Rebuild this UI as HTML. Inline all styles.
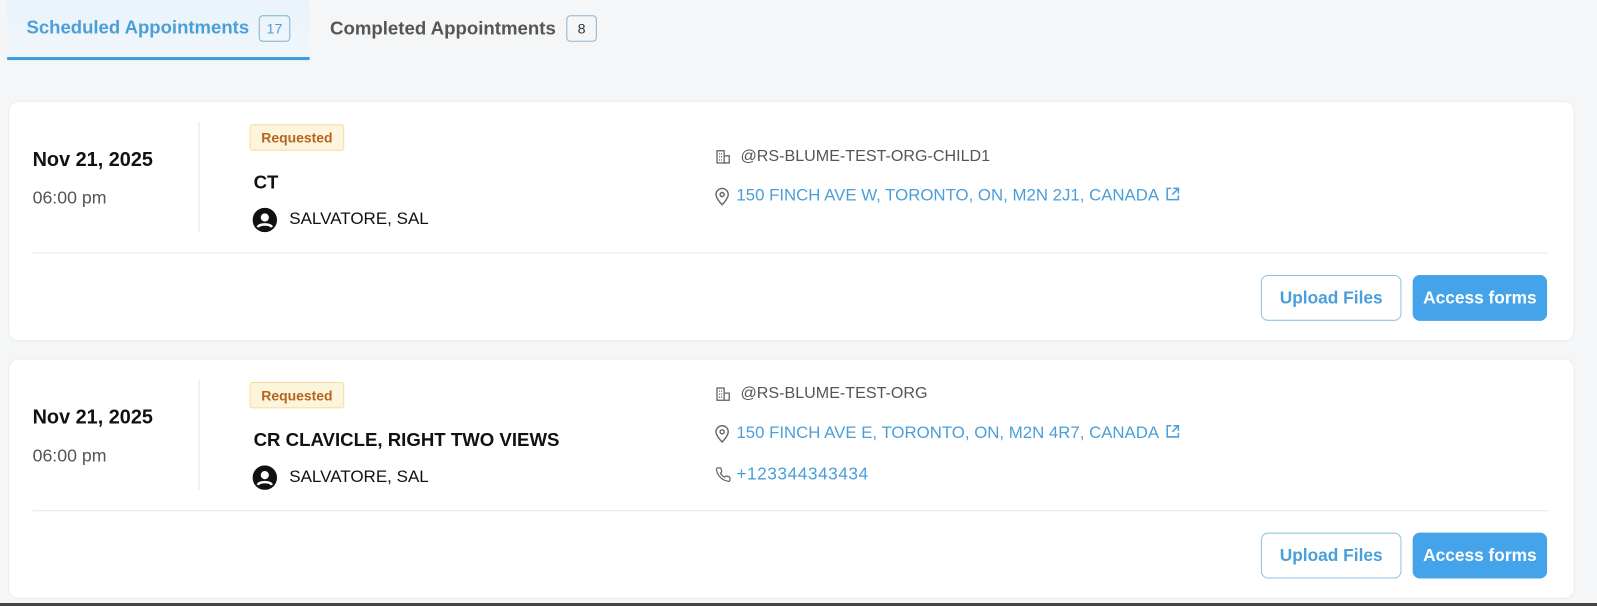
<!DOCTYPE html>
<html><head><meta charset="utf-8"><style>
*{margin:0;padding:0;box-sizing:border-box}
body{width:1597px;height:606px;background:#f5f6f7;font-family:"Liberation Sans",Arial,sans-serif;position:relative;overflow:hidden}
#w{position:absolute;left:0;top:0;width:1568px;height:595px;transform:scale(1.0185);transform-origin:0 0}
.a{position:absolute;white-space:nowrap}
.tab{top:0;height:59px;left:7px;width:297px;background:linear-gradient(#eaf3fb,#f0f6fb);border-bottom:3px solid #3d9be0}
.badge{border:1.5px solid #7fb2cf;border-radius:4px;height:26px;font-size:14px;display:flex;align-items:center;justify-content:center;color:#333}
.card{left:8px;width:1538px;height:236px;background:#fff;border:1px solid #ebeced;border-radius:10px}
.date{font-size:19.5px;font-weight:bold;color:#111;left:32px}
.time{font-size:17.4px;color:#555;left:32px}
.vd{left:195px;width:1px;height:108px;background:#e3e3e3}
.req{left:245px;width:93px;height:26px;background:#fdf4dc;border:1px solid #f3dca4;border-radius:3px;color:#b5651d;font-size:13.7px;font-weight:bold;display:flex;align-items:center;justify-content:center}
.title{left:249px;font-size:18.3px;font-weight:bold;color:#111}
.user{left:284px;font-size:16.7px;color:#111}
.org{left:727px;font-size:15.8px;color:#555}
.blue{left:723px;font-size:16.5px;color:#4a9fd8}
.blue svg{margin-left:6px;vertical-align:-1px}
.hl{left:32px;width:1488px;height:1px;background:#e6e6e6}
.btn{height:45px;border-radius:7px;font-size:17px;font-weight:bold;display:flex;align-items:center;justify-content:center}
.up{left:1238px;width:138px;border:1.5px solid #8ec3e0;color:#4a9fd8;background:#fff}
.ac{left:1387px;width:132px;background:#45a3ea;color:#fff}
</style></head><body>
<div id="w">
<div class="a tab"></div>
<div class="a" style="left:26px;top:17px;font-size:18.2px;color:#4a9fd8;font-weight:bold">Scheduled Appointments</div>
<div class="a badge" style="left:254px;top:15px;width:31px;color:#4a9fd8;border-color:#7fb2cf">17</div>
<div class="a" style="left:324px;top:17px;font-size:18.3px;color:#555;font-weight:bold">Completed Appointments</div>
<div class="a badge" style="left:556px;top:15px;width:30px;border-color:#8fb5cc">8</div>

<div class="a card" style="top:99px"></div>
<div class="a date" style="top:146px">Nov 21, 2025</div>
<div class="a time" style="top:184px">06:00 pm</div>
<div class="a vd" style="top:120px"></div>
<div class="a req" style="top:122px">Requested</div>
<div class="a title" style="top:168px">CT</div>
<svg class="a" style="left:248px;top:204px" width="24" height="24" viewBox="0 0 24 24"><circle cx="12" cy="12" r="12" fill="#111"/><circle cx="12" cy="9.5" r="4" fill="#fff"/><path d="M5 19c2-3.5 12-3.5 14 0" stroke="#fff" stroke-width="2.5" fill="none"/></svg>
<div class="a user" style="top:205px">SALVATORE, SAL</div>
<svg class="a" style="left:702px;top:146px" width="16" height="16" viewBox="0 0 16 16" fill="none" stroke="#666" stroke-width="1.3"><rect x="2" y="2" width="7" height="12"/><path d="M9 7h5v7H9M4 5h1M6 5h1M4 8h1M6 8h1M4 11h1M6 11h1"/></svg>
<div class="a org" style="top:145px">@RS-BLUME-TEST-ORG-CHILD1</div>
<svg class="a" style="left:701px;top:184px" width="16" height="18" viewBox="0 0 16 18" fill="none" stroke="#666" stroke-width="1.4"><path d="M8 17s6-6 6-10A6 6 0 0 0 2 7c0 4 6 10 6 10z"/><circle cx="8" cy="7" r="2"/></svg>
<div class="a blue" style="top:183px">150 FINCH AVE W, TORONTO, ON, M2N 2J1, CANADA<svg width="15" height="15" viewBox="0 0 15 15" fill="none" stroke="#4a9fd8" stroke-width="1.5"><path d="M6 2H2v11h11V9M8 2h5v5M13 2L7 8"/></svg></div>
<div class="a hl" style="top:248px"></div>
<div class="a btn up" style="top:270px">Upload Files</div>
<div class="a btn ac" style="top:270px">Access forms</div>

<div class="a card" style="top:352px"></div>
<div class="a date" style="top:399px">Nov 21, 2025</div>
<div class="a time" style="top:437px">06:00 pm</div>
<div class="a vd" style="top:373px"></div>
<div class="a req" style="top:375px">Requested</div>
<div class="a title" style="top:421px">CR CLAVICLE, RIGHT TWO VIEWS</div>
<svg class="a" style="left:248px;top:457px" width="24" height="24" viewBox="0 0 24 24"><circle cx="12" cy="12" r="12" fill="#111"/><circle cx="12" cy="9.5" r="4" fill="#fff"/><path d="M5 19c2-3.5 12-3.5 14 0" stroke="#fff" stroke-width="2.5" fill="none"/></svg>
<div class="a user" style="top:458px">SALVATORE, SAL</div>
<svg class="a" style="left:702px;top:379px" width="16" height="16" viewBox="0 0 16 16" fill="none" stroke="#666" stroke-width="1.3"><rect x="2" y="2" width="7" height="12"/><path d="M9 7h5v7H9M4 5h1M6 5h1M4 8h1M6 8h1M4 11h1M6 11h1"/></svg>
<div class="a org" style="top:378px">@RS-BLUME-TEST-ORG</div>
<svg class="a" style="left:701px;top:417px" width="16" height="18" viewBox="0 0 16 18" fill="none" stroke="#666" stroke-width="1.4"><path d="M8 17s6-6 6-10A6 6 0 0 0 2 7c0 4 6 10 6 10z"/><circle cx="8" cy="7" r="2"/></svg>
<div class="a blue" style="top:416px">150 FINCH AVE E, TORONTO, ON, M2N 4R7, CANADA<svg width="15" height="15" viewBox="0 0 15 15" fill="none" stroke="#4a9fd8" stroke-width="1.5"><path d="M6 2H2v11h11V9M8 2h5v5M13 2L7 8"/></svg></div>
<svg class="a" style="left:702px;top:458px" width="16" height="16" viewBox="0 0 24 24" fill="none" stroke="#666" stroke-width="1.8"><path d="M22 16.9v3a2 2 0 0 1-2.2 2 19.8 19.8 0 0 1-8.6-3.1 19.5 19.5 0 0 1-6-6A19.8 19.8 0 0 1 2.1 4.2 2 2 0 0 1 4.1 2h3a2 2 0 0 1 2 1.7c.1 1 .4 1.9.7 2.8a2 2 0 0 1-.5 2.1L8 9.9a16 16 0 0 0 6 6l1.3-1.3a2 2 0 0 1 2.1-.4c.9.3 1.8.6 2.8.7a2 2 0 0 1 1.7 2z"/></svg>
<div class="a blue" style="top:456px;font-size:17px;letter-spacing:0.5px">+123344343434</div>
<div class="a hl" style="top:501px"></div>
<div class="a btn up" style="top:523px">Upload Files</div>
<div class="a btn ac" style="top:523px">Access forms</div>
</div>
<div class="a" style="left:0;top:603px;width:1597px;height:3px;background:#444"></div>
</body></html>
